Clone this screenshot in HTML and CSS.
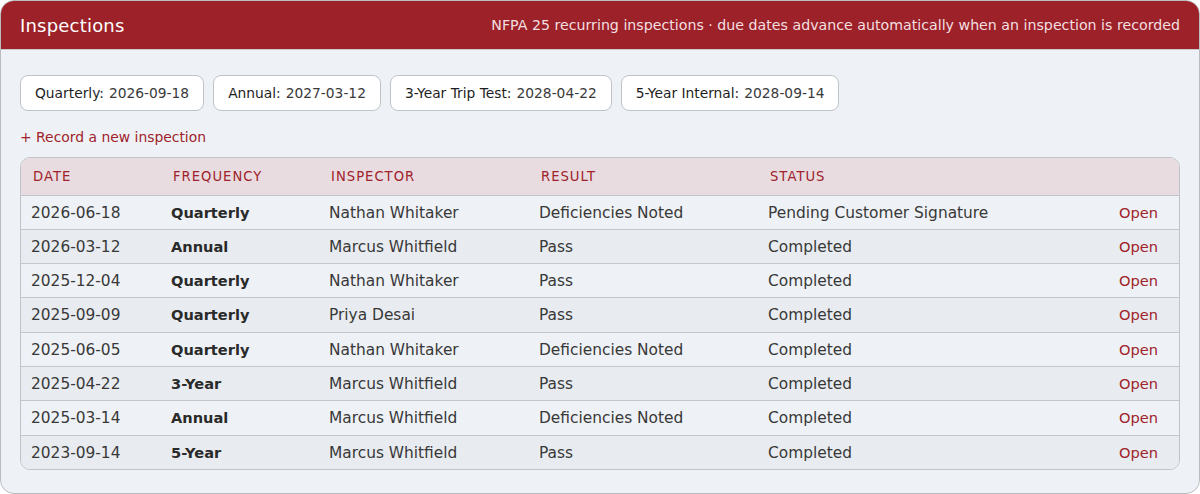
FILE: index.html
```html
<!DOCTYPE html>
<html lang="en">
<head>
<meta charset="utf-8">
<title>Inspections</title>
<link rel="stylesheet" href="styles.css">
</head>
<body>
<section class="panel">
  <header class="panel-head">
    <h1 class="title">Inspections</h1>
    <p class="subtitle">NFPA 25 recurring inspections · due dates advance automatically when an inspection is recorded</p>
  </header>
  <div class="panel-body">
    <div class="chips">
      <span class="chip"><b>Quarterly:</b> 2026-09-18</span>
      <span class="chip"><b>Annual:</b> 2027-03-12</span>
      <span class="chip"><b>3-Year Trip Test:</b> 2028-04-22</span>
      <span class="chip"><b>5-Year Internal:</b> 2028-09-14</span>
    </div>
    <a class="record" href="#">+ Record a new inspection</a>
    <div class="table-wrap">
      <table class="grid">
        <colgroup>
          <col class="c-date"><col class="c-freq"><col class="c-insp"><col class="c-res"><col class="c-stat"><col class="c-act">
        </colgroup>
        <thead>
          <tr><th>Date</th><th>Frequency</th><th>Inspector</th><th>Result</th><th>Status</th><th></th></tr>
        </thead>
        <tbody>
          <tr><td>2026-06-18</td><td class="freq">Quarterly</td><td>Nathan Whitaker</td><td>Deficiencies Noted</td><td>Pending Customer Signature</td><td class="act"><a href="#">Open</a></td></tr>
          <tr><td>2026-03-12</td><td class="freq">Annual</td><td>Marcus Whitfield</td><td>Pass</td><td>Completed</td><td class="act"><a href="#">Open</a></td></tr>
          <tr><td>2025-12-04</td><td class="freq">Quarterly</td><td>Nathan Whitaker</td><td>Pass</td><td>Completed</td><td class="act"><a href="#">Open</a></td></tr>
          <tr><td>2025-09-09</td><td class="freq">Quarterly</td><td>Priya Desai</td><td>Pass</td><td>Completed</td><td class="act"><a href="#">Open</a></td></tr>
          <tr><td>2025-06-05</td><td class="freq">Quarterly</td><td>Nathan Whitaker</td><td>Deficiencies Noted</td><td>Completed</td><td class="act"><a href="#">Open</a></td></tr>
          <tr><td>2025-04-22</td><td class="freq">3-Year</td><td>Marcus Whitfield</td><td>Pass</td><td>Completed</td><td class="act"><a href="#">Open</a></td></tr>
          <tr><td>2025-03-14</td><td class="freq">Annual</td><td>Marcus Whitfield</td><td>Deficiencies Noted</td><td>Completed</td><td class="act"><a href="#">Open</a></td></tr>
          <tr><td>2023-09-14</td><td class="freq">5-Year</td><td>Marcus Whitfield</td><td>Pass</td><td>Completed</td><td class="act"><a href="#">Open</a></td></tr>
        </tbody>
      </table>
    </div>
  </div>
</section>
</body>
</html>
```
FILE: styles.css
```css
* { box-sizing: border-box; }
html, body { margin: 0; padding: 0; }
body {
  font-family: "DejaVu Sans", "Noto Sans", sans-serif;
  color: #333;
  background: #ffffff;
}
.panel {
  height: 494px;
  border: 1px solid #b9bcc0;
  border-radius: 14px;
  overflow: hidden;
  background: #eef2f6;
  display: flex;
  flex-direction: column;
}
.panel-head {
  background: #9c2128;
  color: #fff;
  height: 49px;
  display: flex;
  align-items: center;
  justify-content: space-between;
  padding: 0 19px 0 19px;
  border-bottom: 1px solid #c9c9cc;
}
.title {
  margin: 0;
  font-size: 18px;
  font-weight: normal;
  letter-spacing: 0.2px;
}
.subtitle {
  margin: 0;
  font-size: 14.2px;
  color: #f3dfe0;
}
.panel-body {
  padding: 25px 19px 0 19px;
  display: flex;
  flex-direction: column;
  align-items: flex-start;
}
.chips {
  display: flex;
  gap: 9px;
}
.chip {
  height: 36px;
  display: flex;
  align-items: center;
  gap: 5px;
  padding: 0 14px;
  background: #fff;
  border: 1px solid #bfc2c6;
  border-radius: 8px;
  font-size: 13.8px;
  color: #3a3a3a;
}
.chip b { font-weight: normal; color: #1e1e1e; }
.record {
  margin-top: 17px;
  font-size: 13.9px;
  color: #a0222b;
  text-decoration: none;
  line-height: 18px;
}
.table-wrap {
  margin-top: 11px;
  width: 100%;
  border: 1px solid #c0c3c7;
  border-radius: 10px;
  overflow: hidden;
}
.grid {
  width: 100%;
  border-collapse: collapse;
  table-layout: fixed;
  font-size: 15.4px;
}
.c-date { width: 140px; }
.c-freq { width: 158px; }
.c-insp { width: 210px; }
.c-res { width: 229px; }
.c-stat { width: 300px; }
.grid th {
  background: #e8dce1;
  color: #a0222b;
  text-transform: uppercase;
  font-weight: normal;
  font-size: 13.2px;
  letter-spacing: 1px;
  text-align: left;
  height: 37px;
  padding: 0 12px;
  border-bottom: 1px solid #c0c3c7;
}
.grid tbody tr { vertical-align: baseline; }
.grid td {
  height: 34.3px;
  padding: 7px 10px 0 10px;
  line-height: 20px;
  border-bottom: 1px solid #c4c7cb;
  white-space: nowrap;
  color: #383838;
}
.grid tbody tr:last-child td { border-bottom: none; }
.grid tbody tr:nth-child(odd) td { background: #eef2f6; }
.grid tbody tr:nth-child(even) td { background: #e8ecf0; }
.grid td.freq { font-weight: 600; font-size: 14.6px; color: #2a2a2a; }
.grid td.act { text-align: right; padding-right: 21px; }
.grid td.act a { color: #a0222b; text-decoration: none; font-size: 14.6px; }
```
